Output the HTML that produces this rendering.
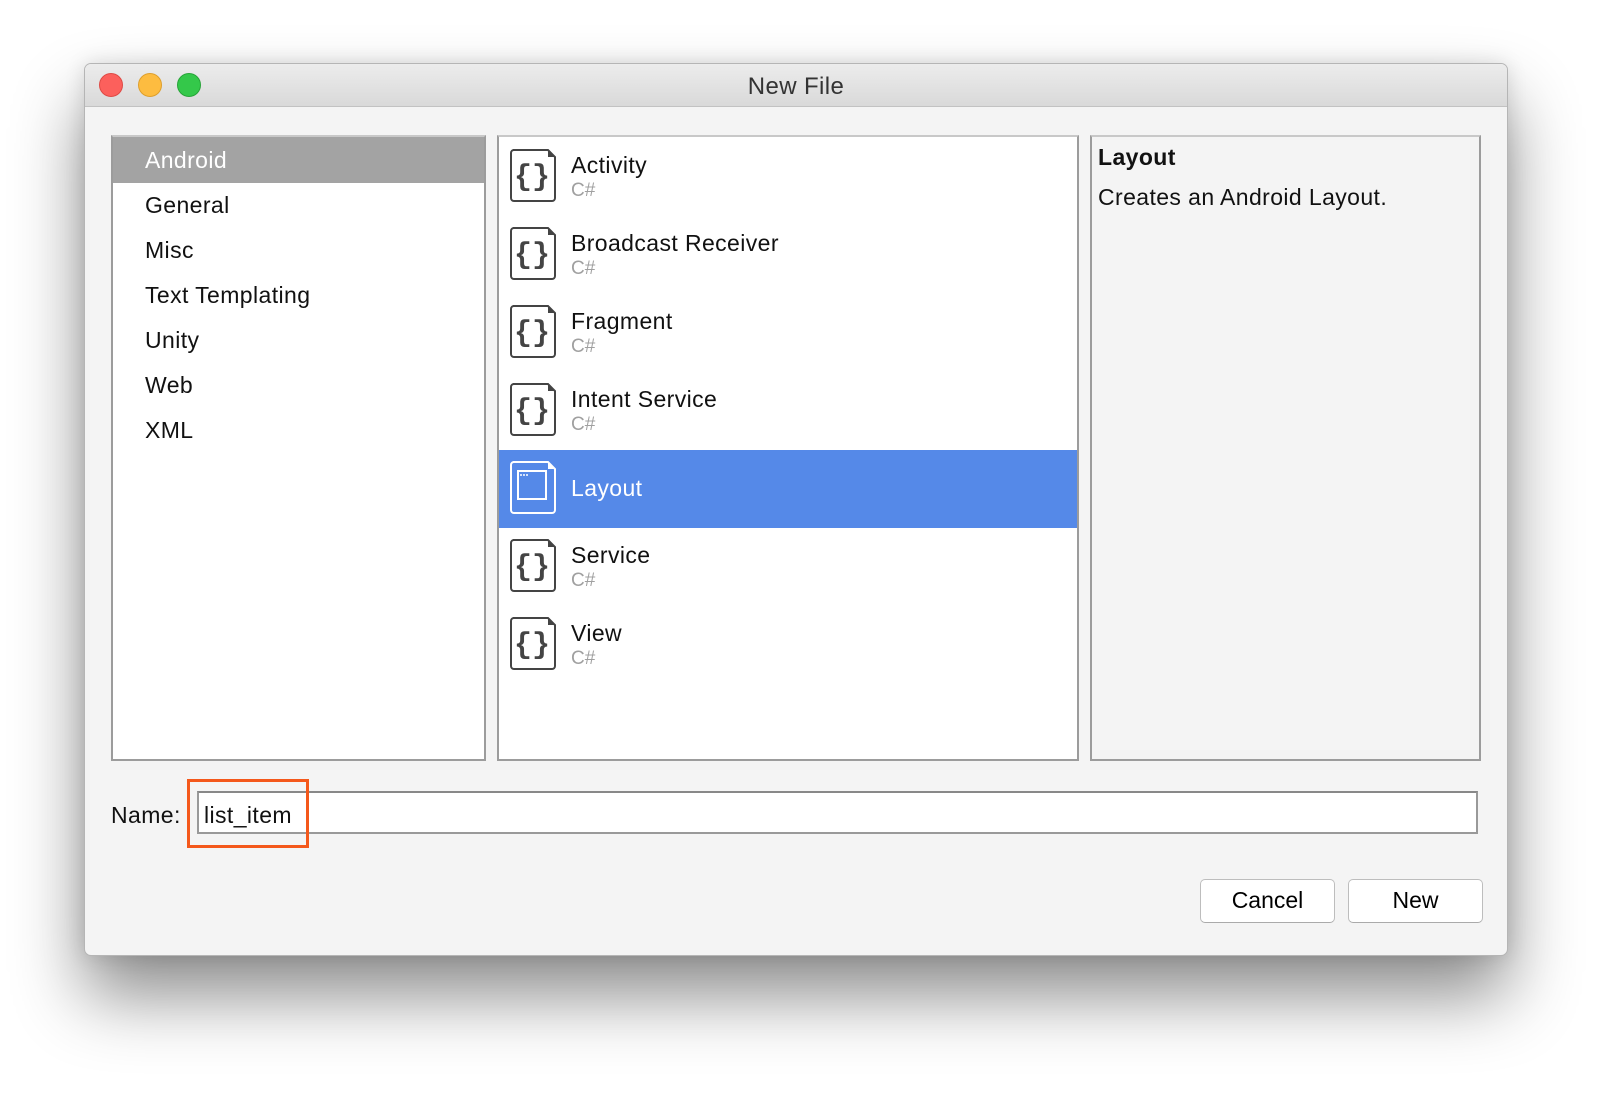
<!DOCTYPE html>
<html><head><meta charset="utf-8"><style>
*{margin:0;padding:0;box-sizing:border-box}
body{width:1600px;height:1120px;background:#fff;font-family:"Liberation Sans",sans-serif;position:relative;overflow:hidden}
.a{position:absolute}
.win{left:84px;top:63px;width:1424px;height:893px;background:#f4f4f4;border-radius:7px;border:1px solid #b5b5b5;box-shadow:0 40px 70px rgba(0,0,0,0.45),0 0 20px rgba(0,0,0,0.12);overflow:hidden}
.tb{left:0;top:0;width:100%;height:43px;background:linear-gradient(#ececec,#d9d9d9);border-bottom:1px solid #c2c2c2}
.dot{width:24px;height:24px;border-radius:50%;top:9px}
.t{font-size:23px;color:#111;white-space:nowrap;letter-spacing:0.4px}
.sub{font-size:19px;color:#a0a0a0}
.panel{background:#fff;border:2px solid #9c9c9c;border-top-color:#c8c8c8}
.ic{width:46px;height:53px}
.btn{background:#fff;border:1px solid #bdbdbd;border-bottom-color:#aaa;border-radius:5px;font-size:23px;text-align:center;line-height:41px}
</style></head><body>
<div class="a win">
 <div class="a tb">
  <div class="a dot" style="left:14px;background:#fc605c;border:1px solid #de4a45"></div>
  <div class="a dot" style="left:53px;background:#fdbc40;border:1px solid #de9f2c"></div>
  <div class="a dot" style="left:92px;background:#34c84a;border:1px solid #27a438"></div>
  <div class="a t" style="left:0;width:100%;text-align:center;top:9px;font-size:24px;color:#333">New File</div>
 </div>
 <div class="a panel" style="left:26px;top:71px;width:375px;height:626px">
  <div class="a" style="left:0;top:0;width:100%;height:46px;background:#a3a3a3"></div>
  <div class="a t" style="left:32px;top:10px;color:#fff">Android</div>
  <div class="a t" style="left:32px;top:55px">General</div>
  <div class="a t" style="left:32px;top:100px">Misc</div>
  <div class="a t" style="left:32px;top:145px">Text Templating</div>
  <div class="a t" style="left:32px;top:190px">Unity</div>
  <div class="a t" style="left:32px;top:235px">Web</div>
  <div class="a t" style="left:32px;top:280px">XML</div>
 </div>
 <div class="a panel" style="left:412px;top:71px;width:582px;height:626px;overflow:hidden">
  <div class="a" style="left:0;top:313px;width:100%;height:78px;background:#5589e8"></div>
  <div id="items"></div>
 </div>
 <div class="a" style="left:1005px;top:71px;width:391px;height:626px;background:#f4f4f4;border:2px solid #9c9c9c;border-top-color:#c8c8c8">
  <div class="a t" style="left:6px;top:7px;font-weight:bold">Layout</div>
  <div class="a t" style="left:6px;top:47px">Creates an Android Layout.</div>
 </div>
 <div class="a t" style="left:26px;top:738px">Name:</div>
 <div class="a" style="left:112px;top:727px;width:1281px;height:43px;background:#fff;border:2px solid #999;border-top-color:#888"></div>
 <div class="a t" style="left:119px;top:738px">list_item</div>
 <div class="a" style="left:102px;top:715px;width:122px;height:69px;border:3px solid #f4581b"></div>
 <div class="a btn" style="left:1115px;top:815px;width:135px;height:44px">Cancel</div>
 <div class="a btn" style="left:1263px;top:815px;width:135px;height:44px">New</div>
</div>
<script>
var names=[["Activity",1],["Broadcast Receiver",1],["Fragment",1],["Intent Service",1],["Layout",0],["Service",1],["View",1]];
var h="";
names.forEach(function(n,i){
 var y=i*78;
 var sel=!n[1];
 var col=sel?"#fff":"#444";
 var inner=sel?'<rect x="8" y="10" width="28" height="28" fill="none" stroke="#fff" stroke-width="2"/><path d="M10 14h2M13 14h2M16 14h2" stroke="#fff" stroke-width="1.5"/>':
 '<text x="22" y="36" font-family="Liberation Mono,monospace" font-size="30" text-anchor="middle" fill="#444" font-weight="bold">{}</text>';
 h+='<svg class="a ic" style="left:11px;top:'+(y+12)+'px" viewBox="0 0 46 53"><path d="M3 1h35l7 7v41a3 3 0 0 1-3 3H4a3 3 0 0 1-3-3V4a3 3 0 0 1 3-3z" fill="'+(sel?"none":"#fff")+'" stroke="'+col+'" stroke-width="2"/><path d="M38 1v7h7z" fill="'+col+'"/>'+inner+'</svg>';
 if(sel){h+='<div class="a t" style="left:72px;top:'+(y+26)+'px;color:#fff">'+n[0]+'</div>';}
 else{h+='<div class="a t" style="left:72px;top:'+(y+15)+'px">'+n[0]+'</div><div class="a sub" style="left:72px;top:'+(y+43)+'px">C#</div>';}
});
document.getElementById("items").innerHTML=h;
</script>
</body></html>
